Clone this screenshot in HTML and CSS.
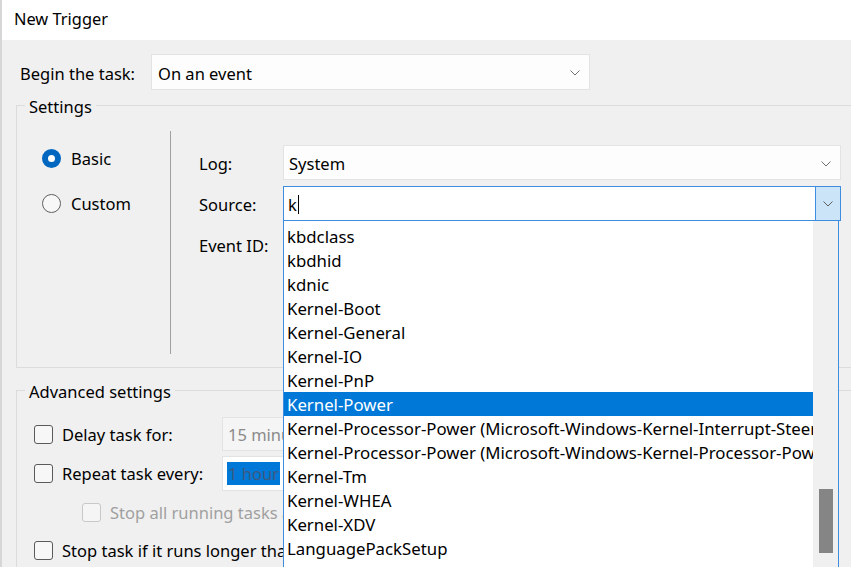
FILE: index.html
```html
<!DOCTYPE html>
<html lang="en">
<head>
<meta charset="utf-8">
<title>New Trigger</title>
<link rel="stylesheet" href="styles.css">
</head>
<body>
<div class="window">
  <div class="titlebar">New Trigger</div>
  <div class="body">
    <div class="begin-row">
      <span class="begin-label">Begin the task:</span>
      <div class="combo begin-combo">
        <span class="combo-text">On an event</span>
        <svg class="chev" width="10" height="6" viewBox="0 0 10 6"><polyline points="0.5,0.5 5,5 9.5,0.5" fill="none" stroke="#707070" stroke-width="1"/></svg>
      </div>
    </div>

    <fieldset class="group settings">
      <legend>Settings</legend>
      <div class="settings-inner">
        <div class="radios">
          <div class="radio-row"><span class="radio checked"></span><span>Basic</span></div>
          <div class="radio-row"><span class="radio"></span><span>Custom</span></div>
        </div>
        <div class="vsep"></div>
        <div class="fields">
          <div class="field-row">
            <span class="field-label">Log:</span>
            <div class="combo log-combo">
              <span class="combo-text">System</span>
              <svg class="chev" width="10" height="6" viewBox="0 0 10 6"><polyline points="0.5,0.5 5,5 9.5,0.5" fill="none" stroke="#707070" stroke-width="1"/></svg>
            </div>
          </div>
          <div class="field-row">
            <span class="field-label">Source:</span>
            <div class="combo source-combo">
              <span class="combo-text typed">k<span class="caret"></span></span>
              <div class="drop-btn">
                <svg width="10" height="6" viewBox="0 0 10 6"><polyline points="0.5,0.5 5,5 9.5,0.5" fill="none" stroke="#606060" stroke-width="1"/></svg>
              </div>
              <div class="dropdown">
                <ul class="list">
                  <li>kbdclass</li>
                  <li>kbdhid</li>
                  <li>kdnic</li>
                  <li>Kernel-Boot</li>
                  <li>Kernel-General</li>
                  <li>Kernel-IO</li>
                  <li>Kernel-PnP</li>
                  <li class="selected">Kernel-Power</li>
                  <li>Kernel-Processor-Power (Microsoft-Windows-Kernel-Interrupt-Steering)</li>
                  <li>Kernel-Processor-Power (Microsoft-Windows-Kernel-Processor-Power)</li>
                  <li>Kernel-Tm</li>
                  <li>Kernel-WHEA</li>
                  <li>Kernel-XDV</li>
                  <li>LanguagePackSetup</li>
                  <li>Lfsvc</li>
                </ul>
                <div class="scrollbar"><div class="thumb"></div></div>
              </div>
            </div>
          </div>
          <div class="field-row">
            <span class="field-label">Event ID:</span>
          </div>
        </div>
      </div>
    </fieldset>

    <fieldset class="group advanced">
      <legend>Advanced settings</legend>
      <div class="adv-inner">
        <div class="adv-row row1">
          <span class="check"></span>
          <span class="adv-label">Delay task for:</span>
          <div class="text-field disabled"><span>15 minutes</span></div>
        </div>
        <div class="adv-row row2">
          <span class="check"></span>
          <span class="adv-label">Repeat task every:</span>
          <div class="text-field"><span class="sel">1 hour</span></div>
        </div>
        <div class="adv-row row3">
          <span class="check dim"></span>
          <span class="adv-label clip3 dim-text">Stop all running tasks at end of repetition duration</span>
        </div>
        <div class="adv-row row4">
          <span class="check"></span>
          <span class="adv-label clip4">Stop task if it runs longer than:</span>
        </div>
      </div>
    </fieldset>
  </div>
</div>
</body>
</html>
```

FILE: styles.css
```css
* { box-sizing: border-box; }

html, body {
  margin: 0;
  padding: 0;
  background: #f0f0f0;
}

body {
  font-family: "Noto Sans", "Open Sans", sans-serif;
  font-size: 16.5px;
  color: #000;
}

.window {
  width: 851px;
  height: 567px;
  overflow: hidden;
  border-left: 2px solid #d6d6d6;
  background: #f0f0f0;
}

.titlebar {
  height: 40px;
  background: #ffffff;
  padding-left: 12px;
  line-height: 38px;
  font-size: 16.4px;
}

.body {
  padding-left: 14px;
}

.begin-row {
  display: flex;
  align-items: center;
  margin-top: 14px;
  padding-left: 4px;
}

.begin-label {
  width: 131px;
  flex: none;
  padding-top: 2px;
}

.combo {
  position: relative;
  display: flex;
  align-items: center;
  background: #fdfdfd;
  border: 1px solid #e3e3e3;
  height: 35px;
}

.combo-text {
  flex: 1;
  white-space: nowrap;
}

.chev {
  flex: none;
  margin-right: 9px;
}

.begin-combo {
  width: 439px;
  height: 36px;
  padding-left: 6px;
  padding-top: 2px;
}

.group {
  margin: 0;
  padding: 0;
  border: 1px solid #dcdcdc;
  width: 870px;
  min-width: 0;
}

.group legend {
  margin-left: 8px;
  padding: 2px 4px 0 4px;
  line-height: 24px;
  height: 24px;
}

.settings {
  margin-top: 3px;
}

.settings-inner {
  display: flex;
  padding-left: 25px;
  padding-bottom: 13px;
}

.radios {
  width: 128px;
  flex: none;
  padding-top: 29px;
  display: flex;
  flex-direction: column;
  gap: 21px;
}

.radio-row {
  display: flex;
  align-items: center;
  height: 24px;
  gap: 10px;
}

.radio {
  width: 19px;
  height: 19px;
  border-radius: 50%;
  border: 1px solid #5f5f5f;
  background: #f7f7f7;
  flex: none;
}

.radio.checked {
  border: 6px solid #0067c0;
  background: #ffffff;
}

.vsep {
  width: 1px;
  flex: none;
  background: #a0a0a0;
  height: 223px;
  margin-top: 14px;
}

.fields {
  padding-left: 28px;
  padding-top: 28px;
  display: flex;
  flex-direction: column;
  gap: 6px;
}

.field-row {
  display: flex;
  align-items: center;
  height: 35px;
}

.field-label {
  width: 84px;
  flex: none;
  padding-top: 2px;
}

.log-combo,
.source-combo {
  width: 558px;
  padding-left: 5px;
  padding-top: 2px;
}

.source-combo {
  background: #ffffff;
  border-color: #3d8ee0;
  padding-left: 4px;
}

.typed {
  display: flex;
  align-items: center;
}

.caret {
  display: inline-block;
  width: 1px;
  height: 19px;
  background: #000;
  margin-left: 1px;
}

.drop-btn {
  align-self: stretch;
  width: 26px;
  margin: -3px -1px -1px 0;
  background: #cce4f7;
  border: 1px solid #3d8ee0;
  display: flex;
  align-items: center;
  justify-content: center;
}

.dropdown {
  position: absolute;
  left: -1px;
  top: calc(100% + 1px);
  width: 556px;
  height: 360px;
  background: #ffffff;
  border-left: 1px solid #3d8ee0;
  border-right: 1px solid #3d8ee0;
  display: flex;
  z-index: 5;
}

.list {
  list-style: none;
  margin: 0;
  padding: 3px 0 0 0;
  flex: 1;
  min-width: 0;
  overflow: hidden;
  font-size: 16.8px;
}

.list li {
  height: 24px;
  line-height: 24px;
  padding-left: 3px;
  padding-top: 1px;
  white-space: nowrap;
  overflow: hidden;
}

.list li.selected {
  background: #0078d7;
  color: #ffffff;
}

.scrollbar {
  width: 25px;
  flex: none;
  background: #f0f0f0;
  padding-left: 6px;
}

.thumb {
  width: 14px;
  height: 64px;
  margin-top: 268px;
  background: #858585;
}

.advanced {
  margin-top: 10px;
}

.adv-inner {
  padding-left: 17px;
  padding-top: 15px;
  padding-bottom: 20px;
}

.adv-row {
  display: flex;
  align-items: center;
}

.row1 { height: 34px; }
.row2 { height: 35px; margin-top: 5px; }
.row3 { height: 24px; margin-top: 9px; padding-left: 48px; }
.row4 { height: 24px; margin-top: 14px; }

.check {
  width: 19px;
  height: 19px;
  border: 1px solid #5a5a5a;
  border-radius: 3px;
  background: #f7f7f7;
  flex: none;
  margin-right: 9px;
}

.check.dim {
  border-color: #c8c8c8;
  background: #f5f5f5;
}

.adv-label {
  width: 160px;
  flex: none;
  white-space: nowrap;
  overflow: hidden;
}

.clip3 { width: 173px; }
.clip4 { width: 221px; }

.dim-text {
  color: #a0a0a0;
}

.text-field {
  align-self: stretch;
  width: 61px;
  border: 1px solid #e3e3e3;
  border-right: none;
  background: #ffffff;
  display: flex;
  align-items: center;
  padding-left: 4px;
  white-space: nowrap;
  overflow: hidden;
}

.text-field.disabled {
  background: #f5f5f5;
  color: #8a8a8a;
  padding-left: 5px;
}

.sel {
  background: #0078d7;
  color: #3d5a80;
  padding: 0 1px;
  line-height: 23px;
}
```
